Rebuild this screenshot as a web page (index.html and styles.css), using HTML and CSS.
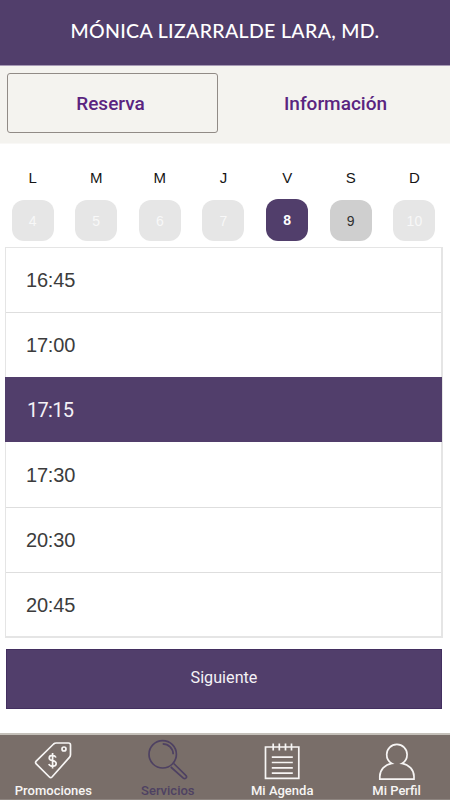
FILE: index.html
```
<!DOCTYPE html>
<html lang="es">
<head>
<meta charset="utf-8">
<meta name="viewport" content="width=device-width">
<title>Reserva</title>
<link rel="stylesheet" href="styles.css">
</head>
<body>
<header class="header"><h1>MÓNICA LIZARRALDE LARA, MD.</h1></header>
<div class="tabs">
  <div class="tab tab-active"><span class="t-reserva">Reserva</span></div>
  <div class="tab"><span>Información</span></div>
</div>
<main>
  <div class="week">
    <div class="day"><span class="name">L</span><span class="num">4</span></div>
    <div class="day"><span class="name">M</span><span class="num">5</span></div>
    <div class="day"><span class="name">M</span><span class="num">6</span></div>
    <div class="day"><span class="name">J</span><span class="num">7</span></div>
    <div class="day"><span class="name">V</span><span class="num selected">8</span></div>
    <div class="day"><span class="name">S</span><span class="num open">9</span></div>
    <div class="day"><span class="name">D</span><span class="num">10</span></div>
  </div>
  <ul class="slots">
    <li>16:45</li>
    <li>17:00</li>
    <li class="chosen">17:15</li>
    <li>17:30</li>
    <li>20:30</li>
    <li>20:45</li>
  </ul>
  <button class="next">Siguiente</button>
</main>
<nav class="nav">
  <a class="item">
    <svg viewBox="0 0 44 44"><path d="M5.2 24.2 22.6 7Q23.7 6 25.2 6H37.5Q39.5 6 39.5 8V17.5Q39.5 19.2 38.4 20.4L21 40Q19.7 41.4 18.4 40L5.2 26.8Q3.9 25.5 5.2 24.2Z"/><circle cx="33" cy="12" r="2"/><path d="M21.6 16V31.500M25 20.500Q24 18.400 21.600 18.400 18.200 18.400 18.200 20.900 18.200 22.900 21.600 23.700 25.200 24.500 25.200 26.600 25.200 29.300 21.600 29.300 18.800 29.300 17.800 27"/></svg>
    <span>Promociones</span>
  </a>
  <a class="item current">
    <svg viewBox="0 0 44 44"><circle cx="16.700" cy="17.300" r="13.700"/><path d="M16.700 6.800A10.500 10.500 0 0 1 27.200 17.300M24.800 30 37.300 41.200Q38.700 42.300 40 41 41.200 39.600 39.800 38.300L27.700 26.500"/></svg>
    <span>Servicios</span>
  </a>
  <a class="item">
    <svg viewBox="0 0 44 44"><path d="M5.500 10H38.800V41.300H5.500Z"/><path d="M13.200 6.600V13.400M19.300 6.600V13.400M25.500 6.600V13.400M31.500 6.600V13.400M11.800 20.200H32.800M11.800 25.500H32.800M11.800 30.800H32.800M11.800 36.200H32.800"/></svg>
    <span>Mi Agenda</span>
  </a>
  <a class="item">
    <svg viewBox="0 0 44 44"><path d="M16.800 26.500C13.500 24.800 11.700 21.500 11.700 17.600A10.200 10.200 0 0 1 32.100 17.600C32.100 21.500 30.300 24.800 27 26.500 34 27.500 39 33 39 39.500V42.200H4.800V39.500C4.800 33 9.800 27.500 16.800 26.500Z"/></svg>
    <span>Mi Perfil</span>
  </a>
</nav>
</body>
</html>
```
FILE: styles.css
```
* { box-sizing: border-box; }
body {
  margin: 0;
  width: 450px;
  height: 800px;
  overflow: hidden;
  display: flex;
  flex-direction: column;
  background: #fff;
  font-family: Roboto, "Liberation Sans", sans-serif;
}
.header {
  height: 66px;
  flex: none;
  padding-top: 18px;
  background: #513e6b;
  border-bottom: 1px solid #a79ab5;
  text-align: center;
}
h1 {
  margin: 0;
  font: 500 19.500px/25px Lato, sans-serif;
  letter-spacing: 0.340px;
  white-space: nowrap;
  color: #fff;
}
.tabs {
  height: 78px;
  flex: none;
  display: grid;
  grid-template-columns: 211px 211px;
  column-gap: 12px;
  padding: 7px 7px 11px;
  background: #f4f3ef;
  border-bottom: 1px solid #f9f8f6;
}
.tab {
  display: flex;
  align-items: center;
  justify-content: center;
  height: 60px;
  border: 1px solid transparent;
  border-radius: 3px;
  color: #5a2480;
  font-size: 19px;
  font-weight: 500;
}
.tab-active { border-color: #918b86; }
.t-reserva { margin-left: -4px; }
main { height: 589px; flex: none; }
.week {
  height: 103px;
  display: grid;
  grid-template-columns: repeat(7, 63.650px);
  justify-content: center;
  margin-left: -3px;
  font-family: "Liberation Sans", sans-serif;
}
.day { display: flex; flex-direction: column; align-items: center; }
.name {
  height: 56px;
  padding-top: 24px;
  font-size: 15px;
  line-height: 20px;
  color: #151515;
}
.num {
  width: 42px;
  height: 41px;
  border-radius: 12px;
  background: #e6e6e6;
  color: #f8f8f8;
  font-size: 14px;
  line-height: 42px;
  text-align: center;
}
.num.selected {
  height: 42px;
  margin-top: -1px;
  background: #513e6b;
  color: #fff;
  font-weight: 700;
}
.num.open { background: #cfcfcf; color: #303030; }
.slots {
  width: 438px;
  height: 391px;
  margin: 0 0 0 5px;
  padding: 0;
  list-style: none;
  border: solid #e5e5e5;
  border-width: 1px 2px 2px 1px;
  font-family: "Liberation Sans", sans-serif;
}
.slots li {
  height: 65px;
  padding-left: 20px;
  border-bottom: 1px solid #dedede;
  font-size: 20px;
  line-height: 65px;
  letter-spacing: -0.200px;
  color: #3c3c3c;
}
.slots li:last-child { border-bottom: 0; }
.slots .chosen {
  margin: -1px -1px 0;
  height: 65px;
  padding-left: 22px;
  border-bottom: 0;
  background: #513e6b;
  font-family: Roboto, sans-serif;
  letter-spacing: -0.700px;
  line-height: 67px;
  color: #f4f1f6;
}
.slots .chosen + li { height: 66px; line-height: 67px; }
.next {
  display: block;
  width: 436px;
  height: 60px;
  margin: 11px 0 0 6px;
  padding: 0 0 3px;
  border: 1px solid #432f60;
  background: #513e6b;
  color: #f4f1f6;
  font: 400 16.200px/20px Roboto, sans-serif;
}
.nav {
  height: 67px;
  flex: none;
  display: grid;
  grid-template-columns: repeat(4, 114.400px);
  justify-content: center;
  background: #796e69;
  border-top: 2px solid #c4c0b9;
  border-bottom: 1px solid #8e8580;
}
.item {
  display: flex;
  flex-direction: column;
  align-items: center;
  padding-top: 2px;
  color: #f7f5f4;
  font-size: 13px;
  font-weight: 500;
  line-height: 20px;
}
.item svg {
  width: 44px;
  height: 44px;
  fill: none;
  stroke: currentColor;
  stroke-width: 1.700;
}
.item.current { color: #4e4162; }
.item span { white-space: nowrap; }
```
